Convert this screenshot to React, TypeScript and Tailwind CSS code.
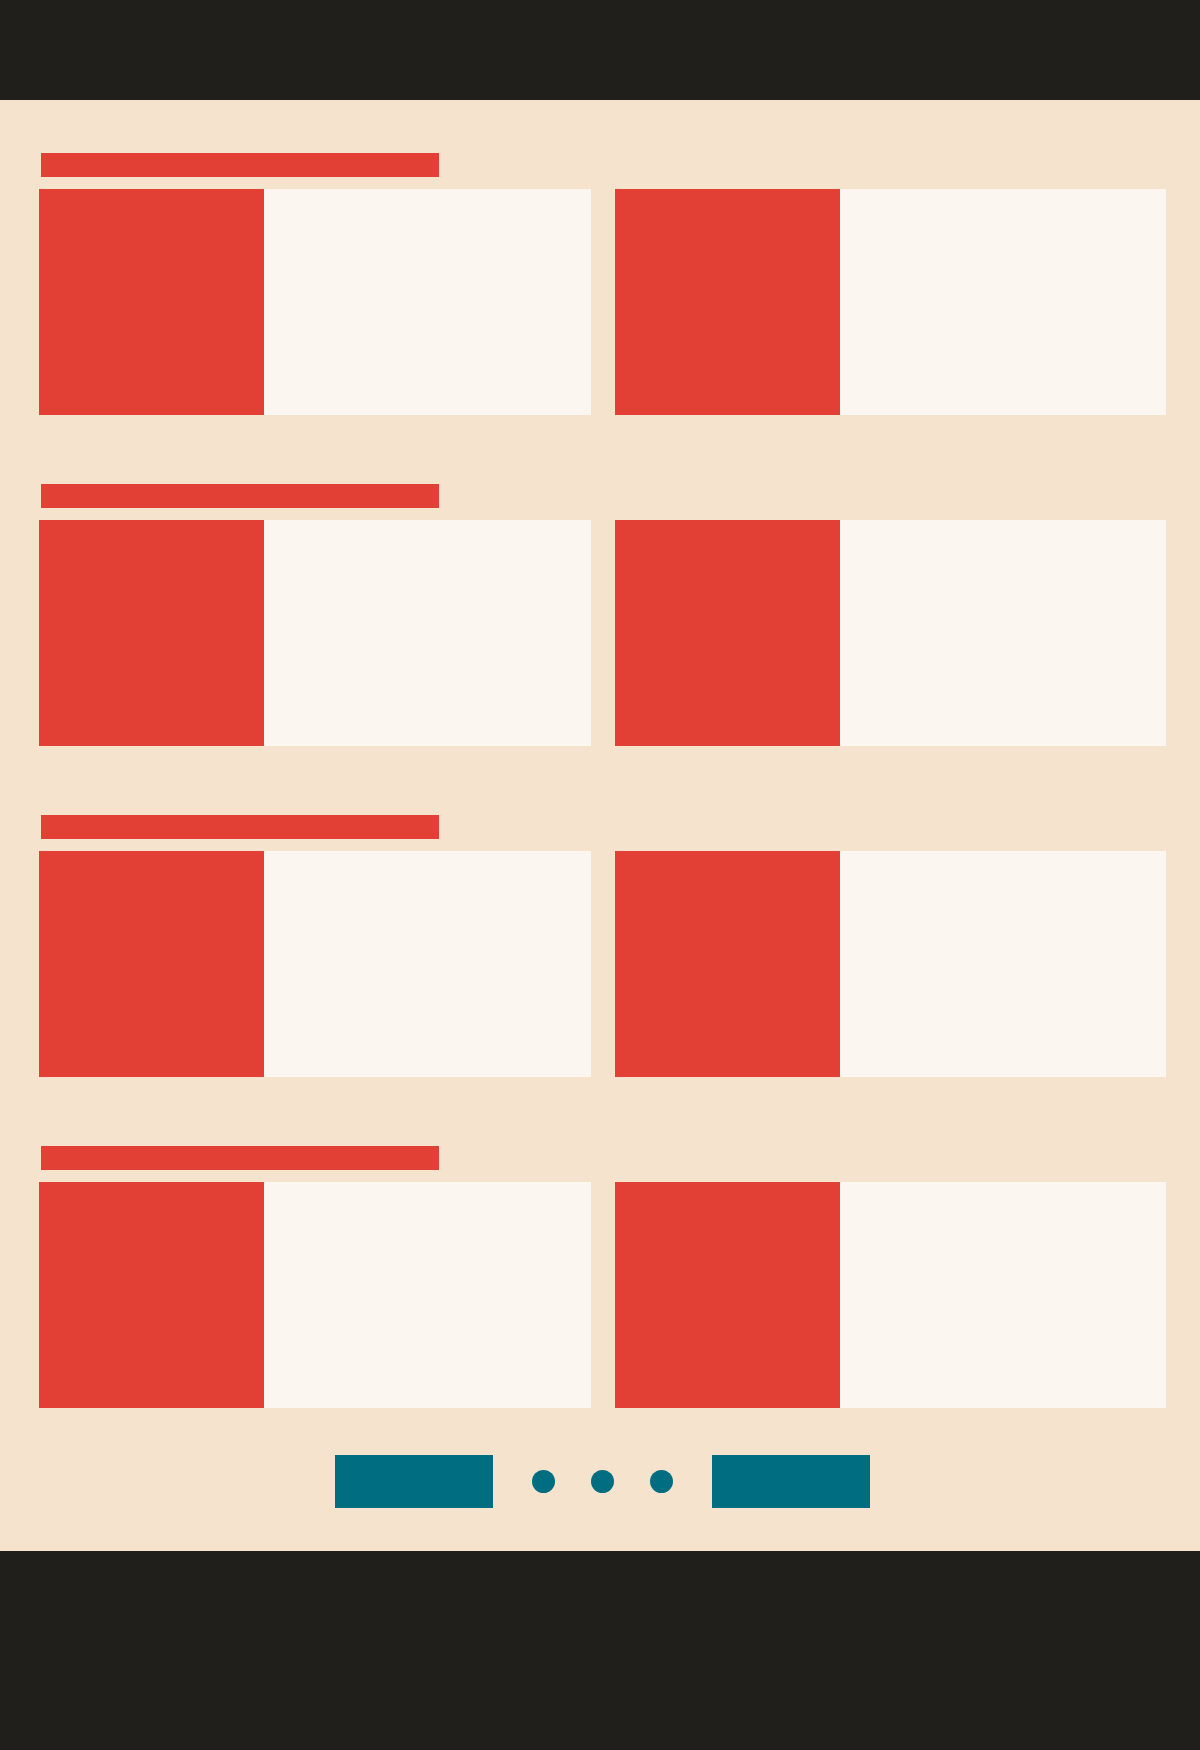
const sections = ["first", "second", "third", "fourth"];

function Card() {
  return (
    <article className="flex h-[226px] bg-[#fbf6ef]">
      <div className="w-[225px] shrink-0 bg-[#e24035]" />
      <div className="min-w-0 flex-1" />
    </article>
  );
}

function Section({ name }: { name: string }) {
  return (
    <section aria-label={`${name} group`}>
      <div className="mb-3 ml-0.5 h-6 max-w-[398px] bg-[#e24035]" />
      <div className="grid grid-cols-1 gap-6 md:grid-cols-2">
        <Card />
        <Card />
      </div>
    </section>
  );
}

function Pagination() {
  return (
    <nav aria-label="Pagination" className="mt-[47px] flex items-center justify-center gap-[39px]">
      <button type="button" aria-label="Previous page" className="h-[53px] w-[158px] bg-[#006d80]" />
      <div className="flex gap-9">
        <button type="button" aria-label="Page 1" className="size-[23px] rounded-full bg-[#006d80]" />
        <button type="button" aria-label="Page 2" className="size-[23px] rounded-full bg-[#006d80]" />
        <button type="button" aria-label="Page 3" className="size-[23px] rounded-full bg-[#006d80]" />
      </div>
      <button type="button" aria-label="Next page" className="h-[53px] w-[158px] bg-[#006d80]" />
    </nav>
  );
}

export default function App() {
  return (
    <div className="flex min-h-screen flex-col bg-[#f5e3ce]">
      <header className="h-[100px] bg-[#211f1b]" />
      <main className="pt-[53px] pr-[34px] pb-[43px] pl-[39px]">
        <div className="flex flex-col gap-[69px]">
          {sections.map((name) => (
            <Section key={name} name={name} />
          ))}
        </div>
        <Pagination />
      </main>
      <footer className="min-h-[199px] flex-1 bg-[#211f1b]" />
    </div>
  );
}
